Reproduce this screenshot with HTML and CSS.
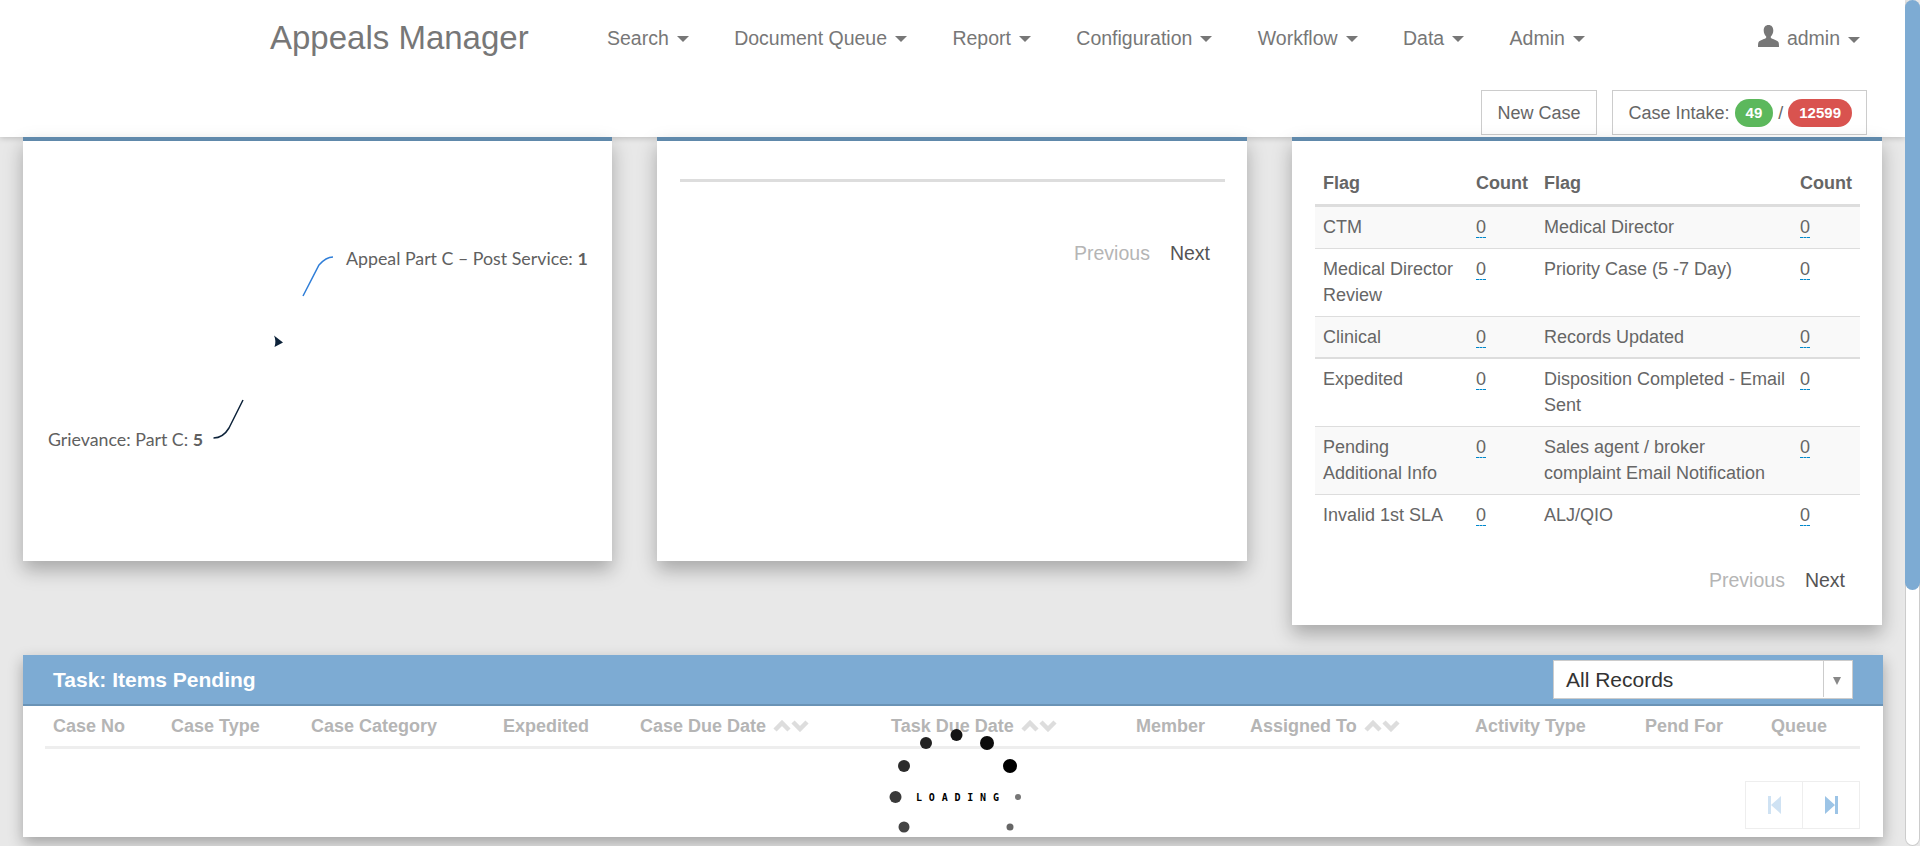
FILE: index.html
```html
<!DOCTYPE html>
<html lang="en">
<head>
  <meta charset="UTF-8" />
  <title>Appeals Manager</title>
  <link rel="stylesheet" href="styles.css">
</head>
<body>
  <div class="page">
    <nav class="navbar">
      <div class="nav-top">
        <a class="brand">Appeals Manager</a>
        <ul class="menu">
          <li>Search<span class="caret"></span></li>
          <li>Document Queue<span class="caret"></span></li>
          <li>Report<span class="caret"></span></li>
          <li>Configuration<span class="caret"></span></li>
          <li>Workflow<span class="caret"></span></li>
          <li>Data<span class="caret"></span></li>
          <li>Admin<span class="caret"></span></li>
        </ul>
        <div class="user">
          <svg class="user-icon" width="21" height="22" viewBox="0 0 21 22"><path d="M10.5 0c3 0 4.8 2.2 4.8 5.4 0 2.400-1 4.600-2.300 5.800-.4.400-.4 1.600.3 2.100 2 1.100 6.300 2.200 7.200 3.900.4 1 .5 2.400.5 4.800H0c0-2.400.1-3.800.5-4.800.9-1.700 5.200-2.800 7.200-3.900.7-.5.7-1.700.3-2.100C6.700 10 5.700 7.800 5.700 5.400 5.700 2.200 7.500 0 10.500 0z"/></svg>
          admin<span class="caret"></span>
        </div>
      </div>
      <div class="nav-actions">
        <button class="nav-btn">New Case</button>
        <div class="nav-btn intake">Case Intake:
          <span class="badge green">49</span> /
          <span class="badge red">12599</span>
        </div>
      </div>
    </nav>

    <main class="content">
      <section class="cards">
        <div class="card short">
          <svg class="chart" viewBox="0 0 589 420">
            <path class="leader blue" d="M280 155L296 124Q303 116 310 116"/>
            <path class="leader navy" d="M220 259L206 287Q200 297 190.500 297"/>
            <path class="slice" d="M251 194.500L260 201.500L251.500 206Q253.500 200 251 194.500z"/>
            <text class="label" x="323" y="124">Appeal Part C – Post Service: <tspan class="num">1</tspan></text>
            <text class="label" x="25" y="305">Grievance: Part C: <tspan class="num">5</tspan></text>
          </svg>
        </div>

        <div class="card short padded">
          <div class="empty-head"></div>
          <div class="pager empty-pager"><span class="off">Previous</span><span>Next</span></div>
        </div>

        <div class="card padded flags">
          <table class="flag-table">
            <thead>
              <tr><th class="c1">Flag</th><th class="c2">Count</th><th class="c3">Flag</th><th class="c4">Count</th></tr>
            </thead>
            <tbody>
              <tr><td>CTM</td><td><a class="zero">0</a></td><td>Medical Director</td><td><a class="zero">0</a></td></tr>
              <tr><td>Medical Director Review</td><td><a class="zero">0</a></td><td>Priority Case (5 -7 Day)</td><td><a class="zero">0</a></td></tr>
              <tr class="thick"><td>Clinical</td><td><a class="zero">0</a></td><td>Records Updated</td><td><a class="zero">0</a></td></tr>
              <tr><td>Expedited</td><td><a class="zero">0</a></td><td>Disposition Completed - Email Sent</td><td><a class="zero">0</a></td></tr>
              <tr><td>Pending Additional Info</td><td><a class="zero">0</a></td><td>Sales agent / broker<br>complaint Email Notification</td><td><a class="zero">0</a></td></tr>
              <tr><td>Invalid 1st SLA</td><td><a class="zero">0</a></td><td>ALJ/QIO</td><td><a class="zero">0</a></td></tr>
            </tbody>
          </table>
          <div class="pager flag-pager"><span class="off">Previous</span><span>Next</span></div>
        </div>
      </section>

      <section class="task">
        <header class="task-bar">
          <h3>Task: Items Pending</h3>
          <div class="combo">
            <span class="combo-value">All Records</span>
            <span class="combo-arrow"></span>
          </div>
        </header>
        <div class="task-body">
          <div class="task-cols">
            <span>Case No</span>
            <span>Case Type</span>
            <span>Case Category</span>
            <span>Expedited</span>
            <span>Case Due Date<svg class="sort" width="36" height="12" viewBox="0 0 36 12"><path d="M2 10L9 3L16 10M20 2L27 9L34 2"/></svg></span>
            <span>Task Due Date<svg class="sort" width="36" height="12" viewBox="0 0 36 12"><path d="M2 10L9 3L16 10M20 2L27 9L34 2"/></svg></span>
            <span>Member</span>
            <span>Assigned To<svg class="sort" width="36" height="12" viewBox="0 0 36 12"><path d="M2 10L9 3L16 10M20 2L27 9L34 2"/></svg></span>
            <span>Activity Type</span>
            <span>Pend For</span>
            <span>Queue</span>
          </div>
          <div class="task-pager">
            <a class="page-btn"><svg width="13" height="18" viewBox="0 0 13 18"><path class="first" d="M0 0h3v18H0zM13 0v18L3 9z"/></svg></a>
            <a class="page-btn"><svg width="13" height="18" viewBox="0 0 13 18"><path class="last" d="M13 0h-3v18h3zM0 0v18l10-9z"/></svg></a>
          </div>
        </div>
        <svg class="loader" width="150" height="110" viewBox="0 0 150 110">
          <circle cx="76.500" cy="10" r="6" fill="#141414"/>
          <circle cx="46" cy="18" r="6" fill="#222"/>
          <circle cx="107" cy="18" r="7" fill="#0c0c0c"/>
          <circle cx="24" cy="41" r="6" fill="#2c2c2c"/>
          <circle cx="130" cy="41" r="7" fill="#000"/>
          <circle cx="15.500" cy="72" r="6" fill="#3a3a3a"/>
          <circle cx="138" cy="72" r="3" fill="#777"/>
          <circle cx="24" cy="102" r="5.500" fill="#444"/>
          <circle cx="130" cy="102" r="3.500" fill="#666"/>
          <text class="loader-text" x="36" y="76">LOADING</text>
        </svg>
      </section>
    </main>
  </div>

  <div class="scrollbar"><div class="thumb"></div></div>
</body>
</html>
```

FILE: styles.css
```css
* {
  box-sizing: border-box;
}
html, body {
  margin: 0;
  height: 846px;
  overflow: hidden;
}
body {
  display: flex;
  background: #e8e8e8;
  font-family: "Liberation Sans", Arial, sans-serif;
  font-size: 18px;
  line-height: 26px;
  color: #666;
}
.page {
  flex: 1;
  min-width: 0;
}

/* navbar */
.navbar {
  height: 137px;
  background: #fff;
  box-shadow: 0 1px 6px rgba(0,0,0,0.2);
  padding: 0 38px 2px 270px;
  display: flex;
  flex-direction: column;
  justify-content: space-between;
}
.nav-top {
  display: flex;
  align-items: center;
  height: 76px;
  color: #777;
  font-size: 19.500px;
}
.brand {
  font-size: 33px;
  width: 337px;
}
.menu {
  display: flex;
  gap: 45.400px;
  list-style: none;
  margin: 0;
  padding: 0;
}
.caret {
  display: inline-block;
  width: 0;
  height: 0;
  margin-left: 8px;
  vertical-align: 3px;
  border-top: 6px solid #777;
  border-left: 6px solid transparent;
  border-right: 6px solid transparent;
}
.user {
  margin-left: auto;
  margin-right: 7px;
  display: flex;
  align-items: center;
  gap: 8px;
}
.user .caret {
  margin-left: 0;
  margin-top: 3px;
}
.user-icon {
  fill: #777;
  margin-top: -4px;
}
.nav-actions {
  display: flex;
  justify-content: flex-end;
  gap: 15px;
}
.nav-btn {
  height: 45px;
  padding: 0 15px;
  border: 1px solid #ccc;
  background: #fff;
  font: inherit;
  color: #666;
  display: flex;
  align-items: center;
}
.intake {
  gap: 5px;
  padding: 0 14px 0 16px;
  white-space: nowrap;
}
.badge {
  height: 28px;
  border-radius: 14px;
  padding: 0 11px;
  color: #fff;
  font-size: 15px;
  font-weight: bold;
  line-height: 28px;
}
.green { background: #5cb85c; }
.red { background: #d9534f; }

/* cards */
.content {
  padding: 0 22px 0 23px;
}
.cards {
  display: grid;
  grid-template-columns: 589px 590px 1fr;
  gap: 45px;
  align-items: start;
  margin-right: 1px;
}
.card {
  background: #fff;
  border-top: 4px solid #6089ab;
  box-shadow: 0 9px 18px rgba(0,0,0,0.28);
}
.short {
  height: 424px;
}
.padded {
  padding: 0 22px 0 23px;
}
.chart {
  display: block;
  width: 100%;
}
.leader {
  fill: none;
  stroke-width: 1.500;
}
.leader.blue { stroke: #2f7ed8; }
.leader.navy { stroke: #0d233a; }
.slice { fill: #0d233a; }
.label {
  font-family: Lato, sans-serif;
  font-size: 17.800px;
  fill: #606060;
}
.num {
  font-weight: bold;
}
.empty-head {
  height: 41px;
  border-bottom: 3px solid #ddd;
}
.pager {
  display: flex;
  justify-content: flex-end;
  gap: 20px;
  padding-right: 15px;
  color: #555;
  font-size: 19.500px;
}
.off {
  color: #b5b5b5;
}
.empty-pager {
  margin-top: 58px;
}
.flag-pager {
  margin-top: 31px;
  padding-bottom: 32px;
}

/* flag table */
.card.flags {
  padding-top: 21px;
}
.flag-table {
  width: 100%;
  table-layout: fixed;
  border-collapse: collapse;
}
.flag-table th {
  text-align: left;
  padding: 8px;
  border-bottom: 3px solid #ddd;
}
.c1 { width: 153px; }
.c2 { width: 68px; }
.c4 { width: 68px; }
.flag-table td {
  padding: 7px 8px 8px;
  vertical-align: top;
  border-bottom: 1px solid #ddd;
}
.flag-table td:nth-child(3) {
  padding-right: 5px;
}
.flag-table tbody tr:last-child td {
  border-bottom: 0;
}
.flag-table tbody tr:nth-child(odd) {
  background: #f9f9f9;
}
.flag-table tbody tr:last-child {
  background: #fff;
}
.flag-table .thick td {
  padding-bottom: 7px;
  border-bottom-width: 2px;
}
.zero {
  border-bottom: 1px dashed #0088cc;
}

/* task panel */
.task {
  position: relative;
  margin-top: 30px;
  height: 182px;
  background: #fff;
  box-shadow: 0 6px 14px rgba(0,0,0,0.3);
}
.task-bar {
  height: 51px;
  background: #7dabd3;
  border-bottom: 2px solid #6a93b6;
  padding: 5px 30px 0 30px;
  display: flex;
  justify-content: space-between;
  align-items: flex-start;
}
.task-bar h3 {
  margin: 0;
  font-size: 21px;
  line-height: 40px;
  color: #fff;
}
.combo {
  width: 300px;
  height: 39px;
  background: #fff;
  border: 1px solid #ccc;
  display: flex;
  align-items: center;
  padding-left: 12px;
  color: #333;
  font-size: 21px;
  position: relative;
}
.combo-arrow {
  position: absolute;
  right: 0;
  top: 0;
  width: 29px;
  height: 36px;
  border-left: 1px solid #ccc;
}
.combo-arrow::after {
  content: "";
  position: absolute;
  left: 9px;
  top: 16px;
  border-top: 8px solid #888;
  border-left: 4.500px solid transparent;
  border-right: 4.500px solid transparent;
}
.task-body {
  padding: 0 23px 0 22px;
}
.task-cols {
  display: grid;
  grid-template-columns: 118px 140px 192px 137px 251px 245px 114px 225px 170px 126px 97px;
  height: 43px;
  border-bottom: 3px solid #eee;
  align-items: center;
  font-weight: bold;
  color: #b5b5b5;
}
.task-cols span {
  padding-left: 8px;
  white-space: nowrap;
}
.sort {
  margin-left: 7px;
  fill: none;
  stroke: #ddd;
  stroke-width: 4.500;
}
.task-pager {
  display: flex;
  justify-content: flex-end;
  margin-top: 32px;
}
.page-btn {
  width: 58px;
  height: 48px;
  border: 1px solid #eee;
  display: flex;
  align-items: center;
  justify-content: center;
}
.page-btn + .page-btn {
  margin-left: -1px;
}
.first { fill: #cfe2f3; }
.last { fill: #9cc4e6; }
.loader {
  position: absolute;
  left: 857px;
  top: 70px;
}
.loader-text {
  font-family: "DejaVu Sans Mono", monospace;
  font-size: 10px;
  font-weight: bold;
  letter-spacing: 6.800px;
  fill: #000;
}

/* page scrollbar */
.scrollbar {
  width: 15px;
  height: 846px;
  background: #fff;
  border: 1px solid #ccc;
  border-top: 0;
  border-radius: 8px;
  flex-shrink: 0;
}
.thumb {
  width: 15px;
  margin-left: -1px;
  height: 590px;
  background: #7dabd3;
  border-radius: 8px;
}
```
